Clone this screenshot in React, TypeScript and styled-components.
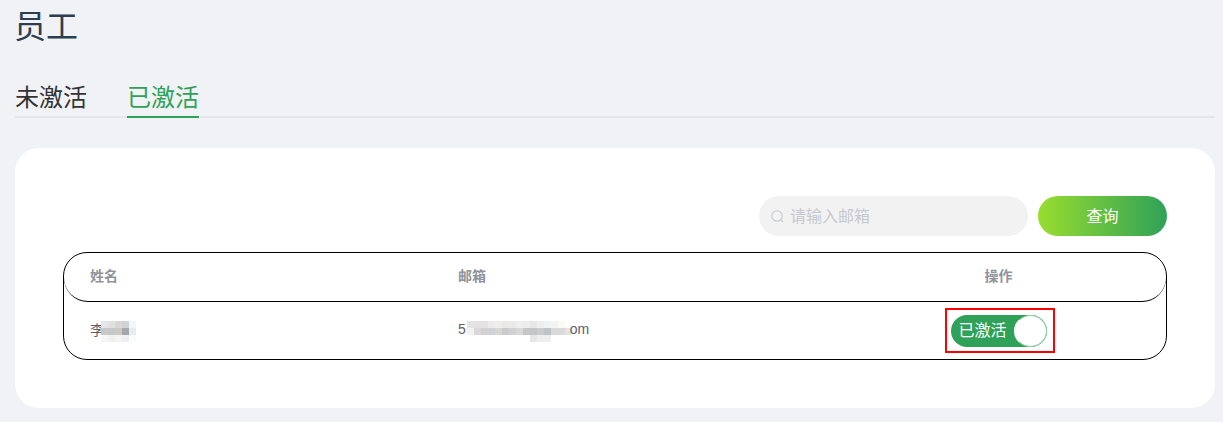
import React from 'react';
import styled, { createGlobalStyle } from 'styled-components';

const GlobalStyle = createGlobalStyle`
  html, body {
    margin: 0;
    padding: 0;
    background: #f0f2f5;
  }
  body {
    font-family: "Liberation Sans", "Noto Sans CJK SC", sans-serif;
  }
`;

const nameMosaic = [
  ['#e6e6e6', '#e0e0e0', '#d9d6d3', '#cfd2d6', '#f3f5f8'],
  ['#c8c9cb', '#c6c7c9', '#cbc8c5', '#a6a9ab', '#e8ecf0'],
  ['#f6f6f7', '#f0f0f1', '#f4f4f3', '#eeeff0', '#f9fafb'],
];

const mailMosaic = [
  ['#e4e4e4', '#e2e2e2', '#e4e2e2', '#ececec', '#f0eeec', '#e8e8e8', '#e9e9ea', '#efefef', '#ececec', '#e7e7e7', '#efefef', '#f1f2f3', '#f4f4f4', '#fbf9f6', '#ffffff'],
  ['#f2f2f2', '#d9d9d9', '#d5d0cd', '#ccd2d8', '#d9d6d3', '#c9cbcd', '#d0d2d3', '#d8d8d8', '#c6c6c6', '#c3c4c5', '#c9cbcd', '#bfc2c8', '#d9d9d9', '#d9d9d9', '#e4e4e4'],
  ['#ffffff', '#ffffff', '#ffffff', '#ffffff', '#ffffff', '#ffffff', '#ffffff', '#ffffff', '#ffffff', '#e6e6e6', '#eeeeee', '#eeeeee', '#ffffff', '#ffffff', '#ffffff'],
];

const Staff: React.FC = () => (
  <Page>
    <GlobalStyle />
    <Title>员工</Title>
    <Tabs>
      <Tab>未激活</Tab>
      <Tab $active>已激活</Tab>
    </Tabs>
    <Card>
      <Toolbar>
        <SearchBox>
          <svg width="13" height="13" viewBox="0 0 13 13" fill="none" stroke="#c4c7cf" strokeWidth="1.1">
            <circle cx="6" cy="6" r="5.2" />
            <path d="M9.8 9.8 L12 12" />
          </svg>
          <SearchInput placeholder="请输入邮箱" />
        </SearchBox>
        <QueryButton>查询</QueryButton>
      </Toolbar>
      <Table>
        <HeadRow>
          <HeadCell>姓名</HeadCell>
          <HeadCell>邮箱</HeadCell>
          <HeadCell $center>操作</HeadCell>
        </HeadRow>
        <BodyRow>
          <Cell>
            <CellText>李</CellText>
            <Mosaic $cols={5} $gap={-3}>
              {nameMosaic.flat().map((c, i) => (
                <Pixel key={i} $color={c} />
              ))}
            </Mosaic>
          </Cell>
          <Cell>
            <CellText>5</CellText>
            <Mosaic $cols={15} $gap={1}>
              {mailMosaic.flat().map((c, i) => (
                <Pixel key={i} $color={c} />
              ))}
            </Mosaic>
            <CellText>om</CellText>
          </Cell>
          <ActionCell>
            <Highlight>
              <Toggle>
                已激活
                <Knob />
              </Toggle>
            </Highlight>
          </ActionCell>
        </BodyRow>
      </Table>
    </Card>
  </Page>
);

const Page = styled.div`
  box-sizing: border-box;
  width: 1223px;
  height: 422px;
  padding: 0 8px 0 15px;
  overflow: hidden;
`;

const Title = styled.h1`
  margin: 0 0 0 -1px;
  padding-top: 5px;
  height: 45px;
  font-size: 32px;
  line-height: 38px;
  font-weight: 400;
  color: #2c3e50;
  font-family: "Noto Sans CJK SC", sans-serif;
`;

const Tabs = styled.div`
  display: flex;
  gap: 40px;
  height: 68px;
  align-items: flex-end;
  box-sizing: border-box;
  border-bottom: 2px solid #e4e6ec;
`;

const Tab = styled.div<{ $active?: boolean }>`
  font-size: 24px;
  line-height: 34px;
  height: 37px;
  margin-bottom: -2px;
  color: ${p => (p.$active ? '#2fa158' : '#333')};
  border-bottom: 2px solid ${p => (p.$active ? '#2fa158' : 'transparent')};
  font-family: "Noto Sans CJK SC", sans-serif;
`;

const Card = styled.div`
  margin-top: 30px;
  box-sizing: border-box;
  height: 260px;
  padding: 48px;
  background: #fff;
  border-radius: 24px;
`;

const Toolbar = styled.div`
  display: flex;
  justify-content: flex-end;
  gap: 10px;
  height: 40px;
  margin-bottom: 16px;
`;

const SearchBox = styled.label`
  display: flex;
  align-items: center;
  gap: 6px;
  box-sizing: border-box;
  width: 269px;
  height: 40px;
  padding: 0 12px;
  background: #f2f2f3;
  border-radius: 20px;
`;

const SearchInput = styled.input`
  flex: 1;
  min-width: 0;
  border: 0;
  outline: 0;
  padding: 0 0 2px;
  background: transparent;
  font-size: 16px;
  font-family: "Noto Sans CJK SC", sans-serif;

  &::placeholder {
    color: #c6c8d0;
    opacity: 1;
  }
`;

const QueryButton = styled.button`
  width: 129px;
  height: 40px;
  border: 0;
  border-radius: 20px;
  padding: 0 0 3px;
  color: #fff;
  font-size: 16px;
  font-family: "Noto Sans CJK SC", sans-serif;
  background: linear-gradient(90deg, #99dd2f, #2fa158);
`;

const Table = styled.div`
  box-sizing: border-box;
  height: 108px;
  border: 1px solid #000;
  border-radius: 24px;
`;

const HeadRow = styled.div`
  display: grid;
  grid-template-columns: 368px 1fr 1fr;
  box-sizing: border-box;
  height: 49px;
  align-items: center;
  border-bottom: 1px solid #000;
  border-radius: 24px;
`;

const HeadCell = styled.div<{ $center?: boolean }>`
  padding: 0 0 4px ${p => (p.$center ? '32px' : '26px')};
  text-align: ${p => (p.$center ? 'center' : 'left')};
  font-size: 14px;
  font-weight: 700;
  color: #909399;
  font-family: "Noto Sans CJK SC", sans-serif;
`;

const BodyRow = styled.div`
  display: grid;
  grid-template-columns: 368px 1fr 1fr;
  height: 57px;
  align-items: center;
`;

const Cell = styled.div`
  display: flex;
  align-items: center;
  padding-left: 26px;
  font-size: 14px;
  color: #606266;
`;

const CellText = styled.span`
  padding-bottom: 3px;
`;

const ActionCell = styled.div`
  display: flex;
  justify-content: center;
  padding-left: 34px;
`;

const Mosaic = styled.span<{ $cols: number; $gap: number }>`
  display: grid;
  grid-template-columns: repeat(${p => p.$cols}, 7px);
  grid-auto-rows: 7px;
  margin: 2px -2px 0 ${p => p.$gap}px;
`;

const Pixel = styled.i<{ $color: string }>`
  display: block;
  background: ${p => p.$color};
`;

const Highlight = styled.div`
  display: flex;
  align-items: center;
  box-sizing: border-box;
  width: 110px;
  height: 45px;
  padding-left: 4px;
  border: 2px solid #f00;
`;

const Toggle = styled.div`
  position: relative;
  box-sizing: border-box;
  width: 96px;
  height: 32px;
  padding-left: 8px;
  border-radius: 16px;
  background: #2fa158;
  color: #fff;
  font-size: 16px;
  line-height: 29px;
  font-family: "Noto Sans CJK SC", sans-serif;
`;

const Knob = styled.span`
  position: absolute;
  top: 0;
  right: 0;
  width: 33px;
  height: 32px;
  border-radius: 50%;
  background: #fff;
  border: 1px solid #8fcfa6;
  border-left-color: #fff;
  box-sizing: border-box;
`;

export default Staff;
